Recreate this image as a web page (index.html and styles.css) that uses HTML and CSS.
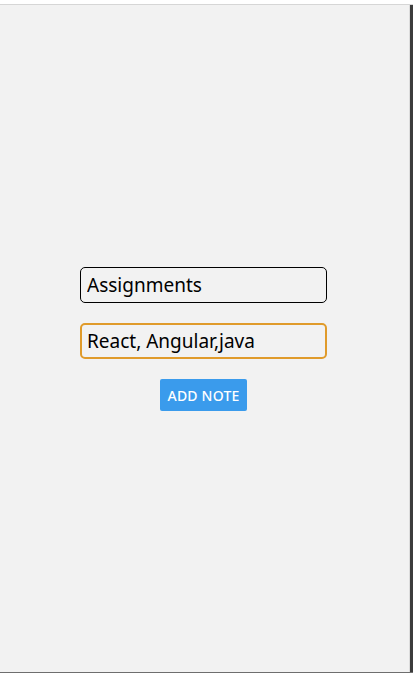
FILE: index.html
```html
<!DOCTYPE html>
<html>
<head>
<meta charset="utf-8">
<link rel="stylesheet" href="styles.css">
</head>
<body>
<div class="topstrip"></div>
<div class="frame">
  <main class="main">
    <form class="note-form">
      <input class="field" type="text" value="Assignments">
      <input class="field field-focus" type="text" value="React, Angular,java">
      <button class="add-btn" type="button">ADD NOTE</button>
    </form>
  </main>
  <div class="sidebar"></div>
</div>
</body>
</html>
```
FILE: styles.css
```css
html, body {
  margin: 0;
  padding: 0;
  height: 673px;
  overflow: hidden;
  background: #ffffff;
}
body {
  display: flex;
  flex-direction: column;
  font-family: "Noto Sans", "Open Sans", sans-serif;
}
.topstrip {
  height: 4px;
  background: #ffffff;
}
.frame {
  flex: 1;
  display: flex;
  border-top: 1px solid #d6d6d6;
  border-bottom: 1px solid #6e6e6e;
  background: #f2f2f2;
}
.main {
  flex: 1;
  display: flex;
  align-items: center;
  justify-content: center;
  padding: 1px 2px 0 0;
  border-right: 1px solid #dcdcdc;
}
.sidebar {
  width: 3px;
  background: #3c3c3c;
}
.note-form {
  display: flex;
  flex-direction: column;
  align-items: center;
  gap: 20px;
}
.field {
  box-sizing: border-box;
  width: 247px;
  height: 36px;
  margin: 0;
  padding: 0 6px;
  border: 1px solid #000000;
  border-radius: 5px;
  background: #f2f2f2;
  color: #000000;
  font-family: "Noto Sans", "Open Sans", sans-serif;
  font-size: 19px;
  outline: none;
}
.field-focus {
  border: 2px solid #e09b2b;
  padding: 0 5px;
}
.add-btn {
  width: 87px;
  height: 32px;
  border: none;
  border-radius: 2px;
  background: #3a9bec;
  color: #ffffff;
  font-family: "Noto Sans", "Open Sans", sans-serif;
  font-size: 14px;
  font-weight: 500;
  letter-spacing: 0.2px;
  padding: 0;
}
```
